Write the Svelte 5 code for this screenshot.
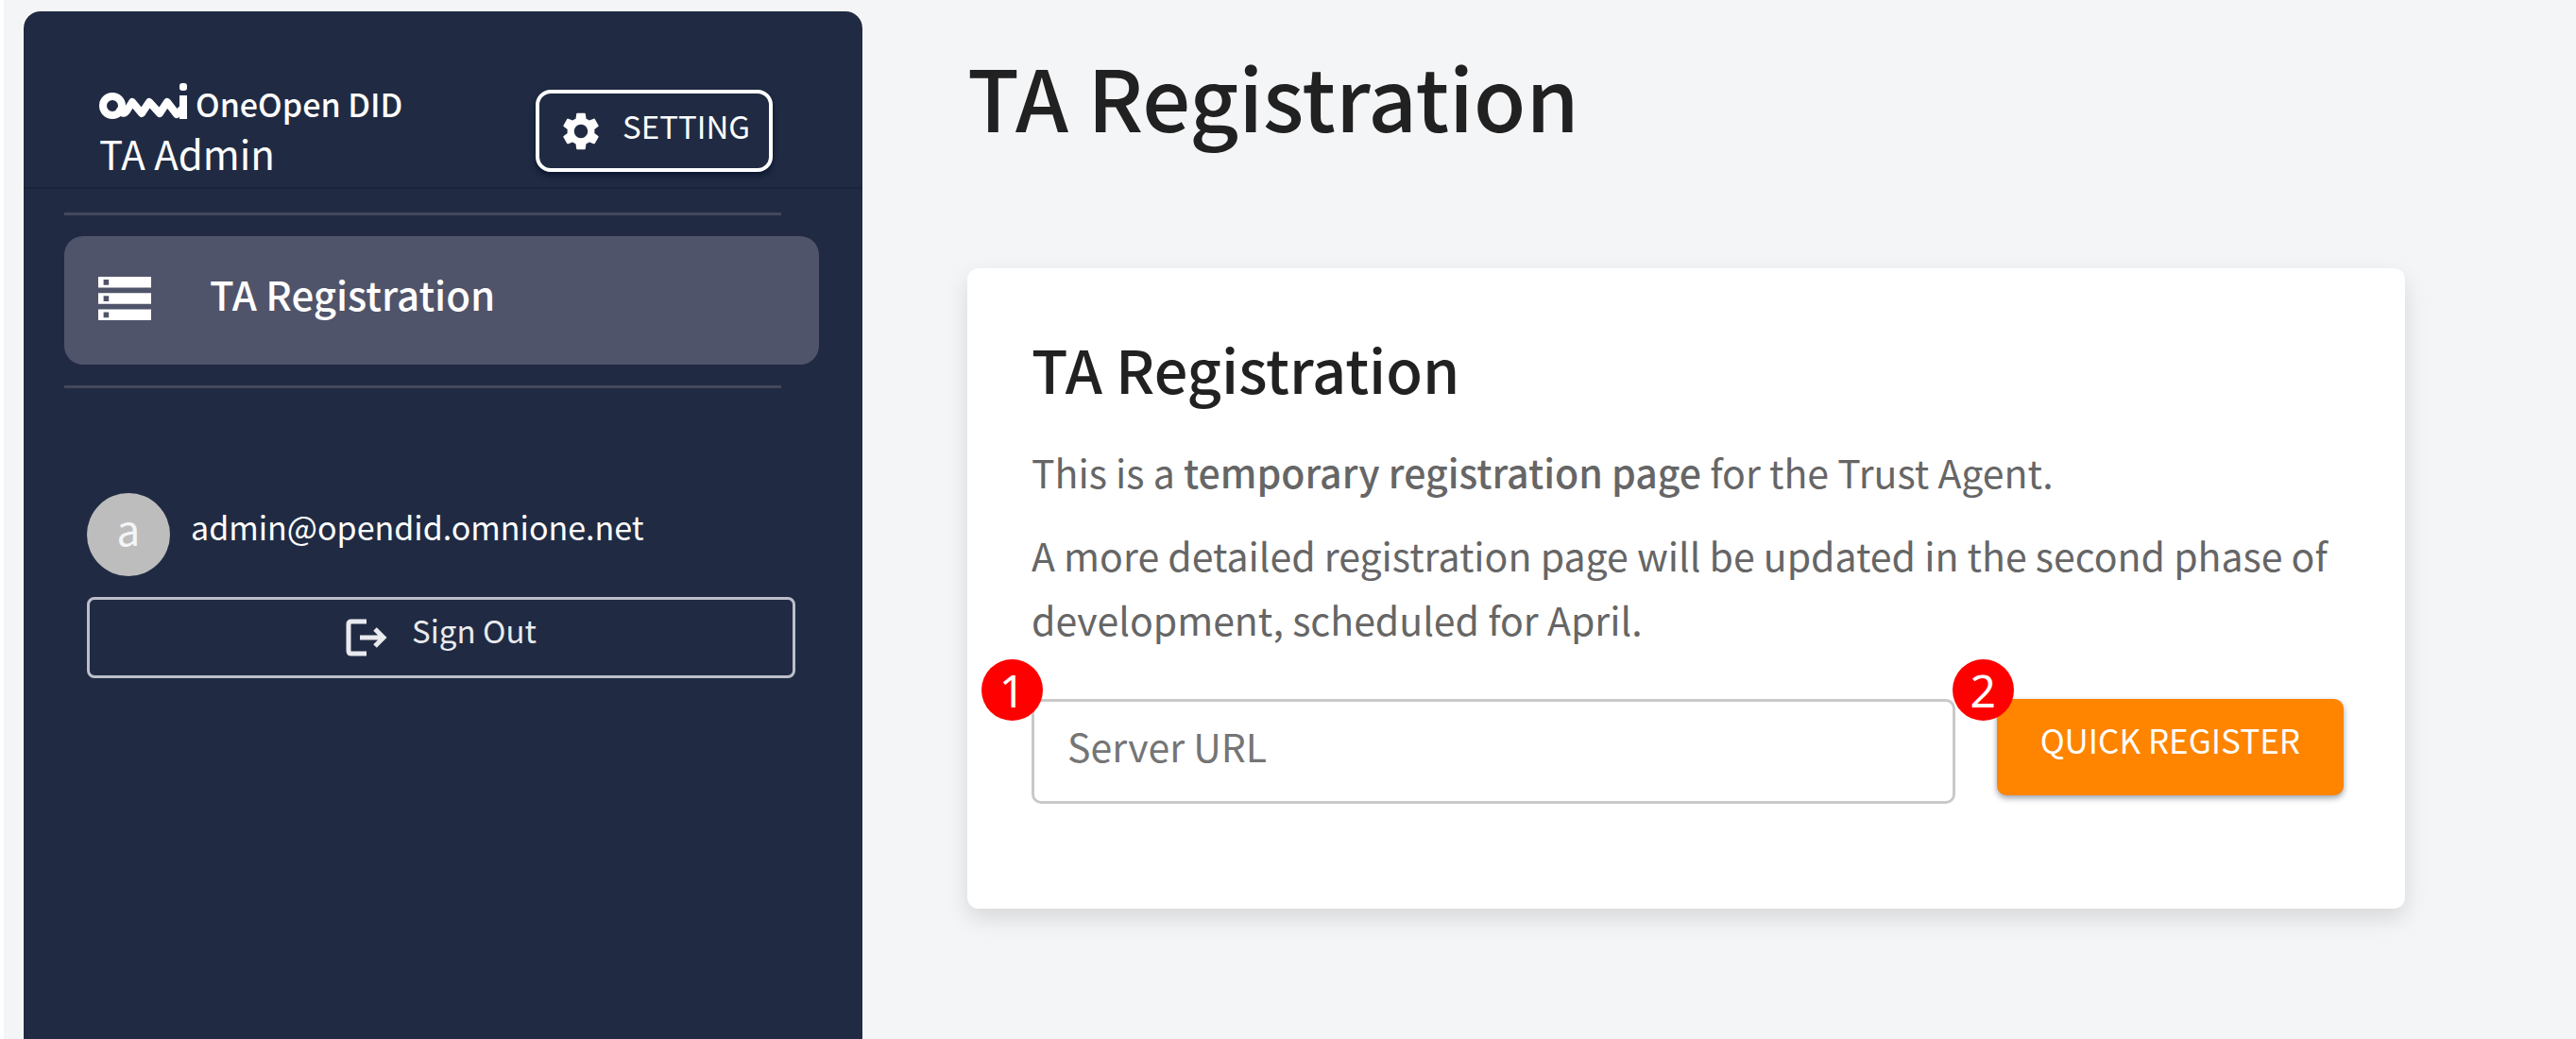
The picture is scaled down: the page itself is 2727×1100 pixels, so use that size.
<script>
  let serverUrl = $state('');
</script>

<div class="page">
  <aside class="sidebar">
    <header class="brand-bar">
      <div class="brand">
        <div class="logo">
          <svg class="mark" viewBox="0 0 94 38" role="img" aria-label="omni">
            <circle cx="14" cy="24" r="10" />
            <path d="M22 29 Q26 35 30 28 L35 20 L45 32 L53 20 L64 32 L72 20 L82 33 L88 27" />
            <path d="M89 13 V38" class="stem" />
            <rect x="85" y="0" width="8" height="8" rx="3" />
          </svg>
          <span>OneOpen DID</span>
        </div>
        <span class="product">TA Admin</span>
      </div>
      <button class="setting" type="button">
        <svg viewBox="0 0 24 24" aria-hidden="true">
          <path
            d="M19.14 12.94c.04-.3.06-.61.06-.94 0-.32-.02-.64-.07-.94l2.03-1.58c.18-.14.23-.41.12-.61l-1.92-3.32c-.12-.22-.37-.29-.59-.22l-2.39.96c-.5-.38-1.03-.7-1.62-.94l-.36-2.54c-.04-.24-.24-.41-.48-.41h-3.84c-.24 0-.43.17-.47.41l-.36 2.54c-.59.24-1.13.57-1.62.94l-2.39-.96c-.22-.08-.47 0-.59.22L2.74 8.87c-.12.21-.08.47.12.61l2.03 1.58c-.05.3-.09.63-.09.94s.02.64.07.94l-2.03 1.58c-.18.14-.23.41-.12.61l1.92 3.32c.12.22.37.29.59.22l2.39-.96c.5.38 1.03.7 1.62.94l.36 2.54c.05.24.24.41.48.41h3.84c.24 0 .44-.17.47-.41l.36-2.54c.59-.24 1.13-.56 1.62-.94l2.39.96c.22.08.47 0 .59-.22l1.92-3.32c.12-.22.07-.47-.12-.61l-2.01-1.58zM12 15.6c-1.98 0-3.6-1.62-3.6-3.6s1.62-3.6 3.6-3.6 3.6 1.62 3.6 3.6-1.62 3.6-3.6 3.6z"
          />
        </svg>
        <span>SETTING</span>
      </button>
    </header>

    <nav>
      <a class="nav-item" href="#ta-registration" aria-current="page">
        <svg viewBox="2 4 20 16" preserveAspectRatio="none" aria-hidden="true">
          <path d="M2 20h20v-4H2v4zm2-3h2v2H4v-2zM2 4v4h20V4H2zm4 3H4V5h2v2zm-4 7h20v-4H2v4zm2-3h2v2H4v-2z" />
        </svg>
        <span>TA Registration</span>
      </a>
    </nav>

    <section class="account">
      <div class="user">
        <span class="avatar" aria-hidden="true">a</span>
        <span class="email">admin@opendid.omnione.net</span>
      </div>
      <button class="sign-out" type="button">
        <svg viewBox="0 0 44 40" aria-hidden="true">
          <path d="M22 3 H6 Q3 3 3 6 V34 Q3 37 6 37 H22" />
          <path d="M15 20 H40 M31 11 L40 20 L31 29" />
        </svg>
        <span>Sign Out</span>
      </button>
    </section>
  </aside>

  <main>
    <h1>TA Registration</h1>
    <section class="card">
      <h2>TA Registration</h2>
      <p>This is a <strong>temporary registration page</strong> for the Trust Agent.</p>
      <p>
        A more detailed registration page will be updated in the second phase of development, scheduled for
        April.
      </p>
      <form onsubmit={(e) => e.preventDefault()}>
        <div class="field">
          <input type="text" placeholder="Server URL" aria-label="Server URL" bind:value={serverUrl} />
          <span class="badge">1</span>
        </div>
        <div class="action">
          <button class="register" type="submit">QUICK REGISTER</button>
          <span class="badge">2</span>
        </div>
      </form>
    </section>
  </main>
</div>

<style>
  :global(body) {
    background: #f4f5f7;
  }

  .page {
    box-sizing: border-box;
    display: grid;
    grid-template-columns: minmax(0, 888fr) minmax(0, 1814fr);
    min-height: 100vh;
    padding: 12px 0 0 21px;
    border-left: 4px solid #fff;
    font-family: 'Noto Sans CJK KR', 'Noto Sans', sans-serif;
    color: #212121;
  }

  button,
  input {
    box-sizing: border-box;
    font-family: inherit;
  }

  .sidebar {
    border-radius: 18px 18px 0 0;
    background: #202b43;
    color: #fff;
    box-shadow: 0 0 0 1px #fff;
  }

  .brand-bar {
    box-sizing: border-box;
    display: flex;
    justify-content: space-between;
    align-items: flex-end;
    height: 188px;
    padding: 0 95px 16px 80px;
    border-bottom: 2px solid #1a243b;
  }

  .brand {
    display: flex;
    flex-direction: column;
    gap: 4px;
    margin-bottom: -4px;
  }

  .logo {
    display: flex;
    align-items: flex-end;
    gap: 8px;
    font-size: 34px;
    line-height: 48px;
    font-weight: 500;
  }

  .mark {
    width: 94px;
    height: 38px;
    margin-bottom: 8px;
    fill: none;
    stroke: #fff;
    stroke-width: 8;
    stroke-linejoin: round;
    stroke-linecap: round;
  }

  .mark .stem {
    stroke-linecap: butt;
  }

  .mark rect {
    fill: #fff;
    stroke: none;
  }

  .product {
    font-size: 42px;
    line-height: 48px;
  }

  .setting {
    display: flex;
    align-items: center;
    gap: 20px;
    height: 87px;
    padding: 0 20px;
    border: 4px solid #fff;
    border-radius: 16px;
    background: transparent;
    color: #fff;
    font-size: 33px;
    line-height: 40px;
    box-shadow: 0 4px 6px #0b1730;
  }

  .setting svg {
    width: 48px;
    height: 48px;
    fill: #fff;
  }

  .setting span {
    padding-bottom: 12px;
  }

  nav {
    margin: 25px 46px 0 43px;
  }

  nav::before,
  nav::after {
    content: '';
    display: block;
    height: 3px;
    margin-right: 40px;
    background: #45485c;
  }

  .nav-item {
    box-sizing: border-box;
    display: flex;
    align-items: center;
    gap: 62px;
    height: 136px;
    margin: 22px 0;
    padding: 0 36px 4px;
    border-radius: 20px;
    background: #50546a;
    color: #fff;
    font-size: 42px;
    line-height: 48px;
    font-weight: 500;
    text-decoration: none;
  }

  .nav-item svg {
    width: 56px;
    height: 46px;
    fill: #fff;
  }

  .nav-item span {
    padding-bottom: 10px;
  }

  .account {
    margin: 111px 71px 0 67px;
  }

  .user {
    display: flex;
    align-items: center;
    gap: 22px;
  }

  .avatar {
    display: flex;
    justify-content: center;
    align-items: center;
    box-sizing: border-box;
    width: 88px;
    height: 88px;
    padding-bottom: 14px;
    border-radius: 50%;
    background: #bdbdbd;
    color: #f4f5f7;
    font-size: 44px;
    line-height: 48px;
  }

  .email {
    padding-bottom: 16px;
    font-size: 34px;
    line-height: 48px;
  }

  .sign-out {
    display: flex;
    justify-content: center;
    align-items: center;
    gap: 26px;
    width: 100%;
    height: 86px;
    margin-top: 22px;
    border: 3px solid #bcbfcb;
    border-radius: 8px;
    background: transparent;
    color: #e9eaee;
    font-size: 33px;
    line-height: 40px;
  }

  .sign-out svg {
    width: 44px;
    height: 40px;
    fill: none;
    stroke: #e9eaee;
    stroke-width: 5;
  }

  .sign-out span {
    padding-bottom: 16px;
  }

  main {
    padding: 35px 60px 60px 111px;
  }

  h1 {
    margin: 0 0 129px;
    font-size: 90px;
    line-height: 108px;
    font-weight: 500;
  }

  .card {
    box-sizing: border-box;
    max-width: 1522px;
    padding: 68px 65px 111px 68px;
    border-radius: 12px;
    background: #fff;
    box-shadow: 0 10px 24px rgba(0, 0, 0, 0.12);
  }

  h2 {
    margin: 0 0 37px;
    font-size: 63px;
    line-height: 76px;
    font-weight: 500;
  }

  p {
    margin: 0 0 20px;
    color: #666;
    font-size: 41px;
    line-height: 68px;
  }

  strong {
    font-weight: 500;
  }

  form {
    display: flex;
    align-items: flex-start;
    gap: 44px;
    margin-top: 51px;
  }

  .field {
    position: relative;
    flex: 1;
  }

  .action {
    position: relative;
  }

  input {
    display: block;
    width: 100%;
    height: 111px;
    padding: 0 35px 14px;
    border: 3px solid #c9c9c9;
    border-radius: 10px;
    background: #fff;
    color: #212121;
    font-size: 41px;
  }

  input::placeholder {
    color: #757575;
    opacity: 1;
  }

  .register {
    height: 102px;
    padding: 0 46px 18px;
    border: 0;
    border-radius: 10px;
    background: #ff8400;
    color: #fff;
    font-size: 35px;
    box-shadow: 0 3px 6px rgba(0, 20, 50, 0.4);
  }

  .badge {
    position: absolute;
    top: -42px;
    left: -53px;
    display: flex;
    justify-content: center;
    align-items: center;
    width: 65px;
    height: 65px;
    border-radius: 50%;
    background: #f00;
    color: #fff;
    font-family: 'Noto Sans', sans-serif;
    font-size: 48px;
    line-height: 65px;
  }

  .action .badge {
    left: -47px;
  }
</style>
